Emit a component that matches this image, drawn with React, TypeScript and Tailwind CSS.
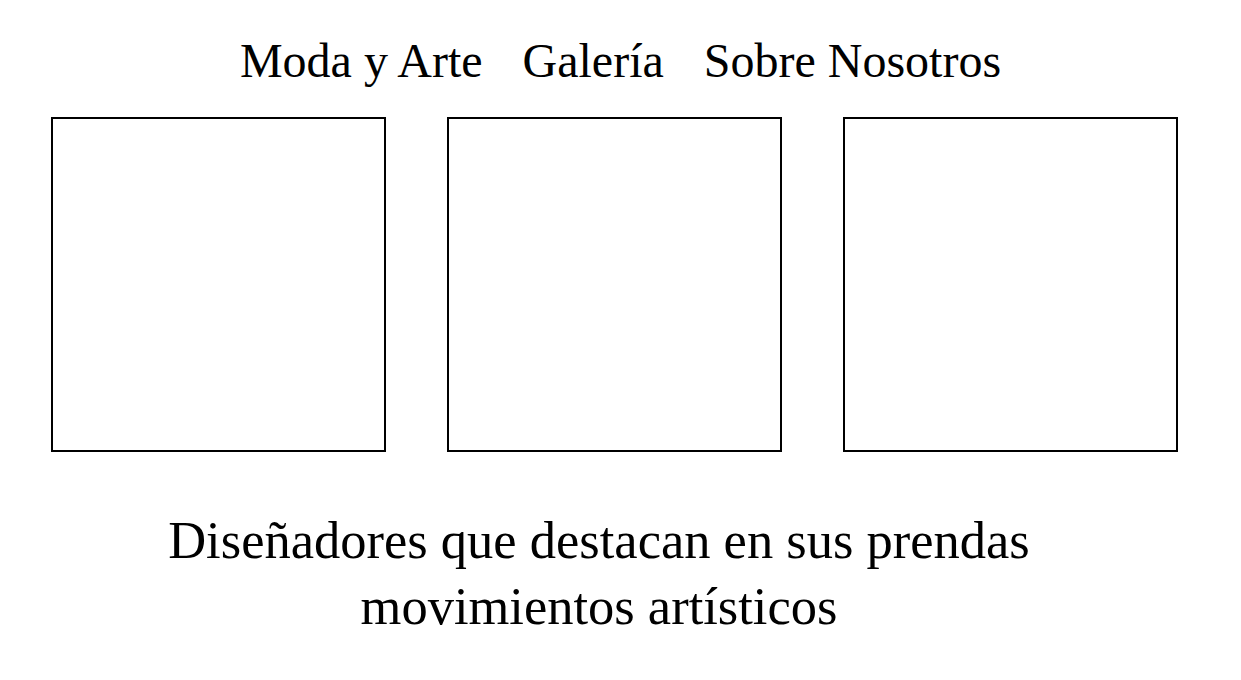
export default function App() {
  const cards = ["uno", "dos", "tres"];

  return (
    <div className="min-h-[680px] bg-white text-black font-['Liberation_Serif','Times_New_Roman',serif]">
      <nav className="pt-[33px] flex justify-center gap-[40px] text-[48px] leading-[55px]">
        <a href="#">Moda y Arte</a>
        <a href="#">Galería</a>
        <a href="#">Sobre Nosotros</a>
      </nav>

      <section className="mt-[29px] pl-[51px] flex gap-[61px]">
        {cards.map((c) => (
          <div key={c} className="w-[335px] h-[335px] border-2 border-black" />
        ))}
      </section>

      <p className="mt-[55px] ml-[119px] w-[960px] text-center text-[52.5px] leading-[66px]">
        Diseñadores que destacan en sus prendas movimientos artísticos
      </p>
    </div>
  );
}
